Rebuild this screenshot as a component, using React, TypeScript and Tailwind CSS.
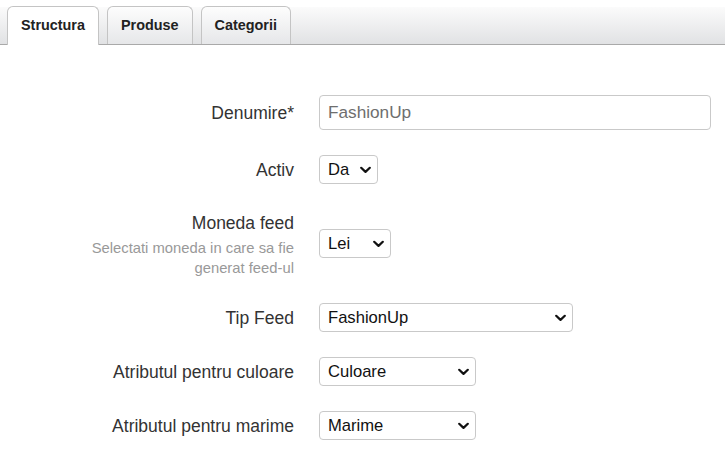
import { ReactNode } from 'react';

const tabs = ['Structura', 'Produse', 'Categorii'];

function Chevron() {
  return (
    <svg
      className="pointer-events-none absolute right-[7px] top-1/2 -translate-y-1/2"
      width="11"
      height="7"
      viewBox="0 0 11 7"
      fill="none"
    >
      <path d="M1.2 1.2 5.5 5.4 9.8 1.2" stroke="#111" strokeWidth="2.2" strokeLinecap="round" strokeLinejoin="round" />
    </svg>
  );
}

interface SelectProps {
  value: string;
  options: string[];
  width: string;
}

function FormSelect({ value, options, width }: SelectProps) {
  return (
    <span className={`relative inline-block ${width}`}>
      <select
        defaultValue={value}
        className="h-[29px] w-full appearance-none rounded-[4px] border border-[#c9c9c9] bg-white pl-[8px] pr-[24px] pt-px text-[16.6px] text-[#111] outline-none"
      >
        {options.map((o) => (
          <option key={o} value={o}>
            {o}
          </option>
        ))}
      </select>
      <Chevron />
    </span>
  );
}

function Row({ label, children }: { label: ReactNode; children: ReactNode }) {
  return (
    <div className="flex items-center gap-[25px]">
      <div className="w-[294px] shrink-0 text-right text-[17.5px] leading-[22px] text-[#333]">{label}</div>
      <div className="flex-1">{children}</div>
    </div>
  );
}

export default function App() {
  return (
    <div className="min-h-[461px] bg-white" style={{ fontFamily: '"Liberation Sans", Arial, sans-serif' }}>
      <div className="pt-[7px]">
        <div className="flex h-[38px] items-end gap-[8px] border-b border-[#a9a9a9] bg-gradient-to-b from-[#fbfbfb] to-[#e1e2e4] pl-[7px]">
          {tabs.map((t, i) => (
            <div
              key={t}
              className={
                i === 0
                  ? '-mb-px flex h-[39px] items-center rounded-t-[6px] border border-b-0 border-[#c4c4c4] bg-white px-[13px] text-[14.4px] font-bold text-[#222]'
                  : 'flex h-[38px] items-center rounded-t-[6px] border border-b-0 border-[#c4c4c4] bg-gradient-to-b from-[#fdfdfd] to-[#e6e7e9] px-[13px] text-[14.4px] font-bold text-[#222]'
              }
            >
              {t}
            </div>
          ))}
        </div>
      </div>

      <div className="flex flex-col gap-[25px] pt-[50px]">
        <Row label="Denumire*">
          <input
            defaultValue="FashionUp"
            className="h-[35px] w-[392px] rounded-[4px] border border-[#c9c9c9] px-[8px] text-[17.2px] text-[#6e6e6e] outline-none"
          />
        </Row>
        <Row label="Activ">
          <FormSelect value="Da" options={['Da', 'Nu']} width="w-[59px]" />
        </Row>
        <Row
          label={
            <div className="pt-[2px]">
              <div className="leading-[24px]">Moneda feed</div>
              <div className="ml-auto mt-[3px] w-[215px] text-[14.8px] leading-[20px] text-[#999]">
                Selectati moneda in care sa fie generat feed-ul
              </div>
            </div>
          }
        >
          <FormSelect value="Lei" options={['Lei', 'EUR', 'USD']} width="w-[72px]" />
        </Row>
        <Row label="Tip Feed">
          <FormSelect value="FashionUp" options={['FashionUp']} width="w-[254px]" />
        </Row>
        <Row label="Atributul pentru culoare">
          <FormSelect value="Culoare" options={['Culoare']} width="w-[157px]" />
        </Row>
        <Row label="Atributul pentru marime">
          <FormSelect value="Marime" options={['Marime']} width="w-[157px]" />
        </Row>
      </div>
    </div>
  );
}
